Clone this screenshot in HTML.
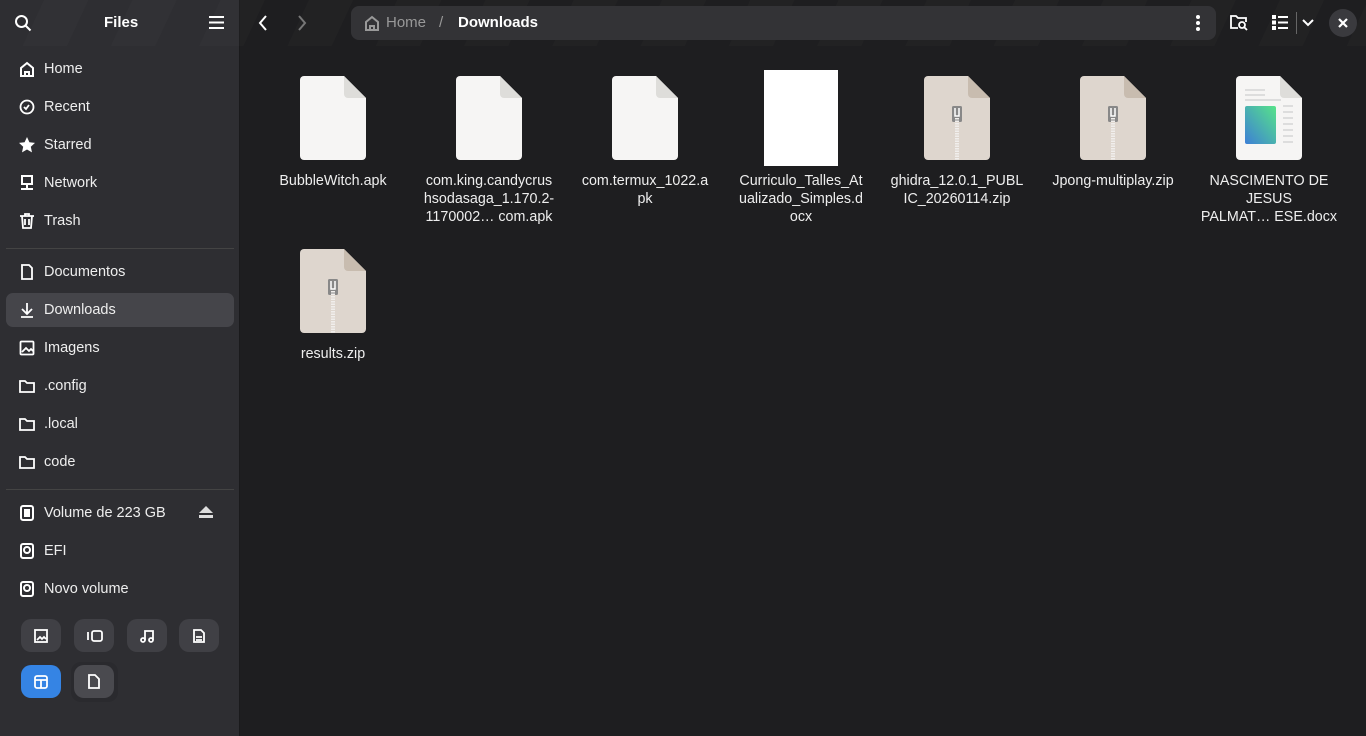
<!DOCTYPE html><html><head><style>
body{margin:0;width:1366px;height:736px;overflow:hidden;background:#1e1e20;font-family:"Liberation Sans",sans-serif;color:#fff;position:relative}
.side{position:absolute;left:0;top:0;width:239px;height:736px;background:#2e2e32;border-right:1px solid #1a1a1c}
.hdr{position:absolute;left:0;top:0;width:1366px;height:46px;background:repeating-linear-gradient(115deg,rgba(255,255,255,0) 0 40px,rgba(255,255,255,.015) 40px 80px)}
.it{position:absolute;left:6px;width:228px;height:34px;font-size:14.5px;line-height:34px;padding-left:38px;box-sizing:border-box;color:#eee}
.it svg{position:absolute;left:13px;top:9px}
.sel{background:#45454a;border-radius:7px}
.sep{position:absolute;left:6px;width:228px;height:1px;background:#444}
.btn{position:absolute;width:40px;height:33px;border-radius:10px;background:#404045}
.f{position:absolute;width:156px;text-align:center;font-size:14.3px;line-height:18px;color:#eee}
.f svg{display:block;margin:0 auto 12px}
</style></head><body>
<div class="side"></div><div class="hdr"></div>
<svg style="position:absolute;left:14px;top:14px" width="18" height="18" fill="none" stroke="#fff" stroke-width="2"><circle cx="7.5" cy="7.5" r="5.5"/><path d="M11.5 11.5l5 5"/></svg>
<div style="position:absolute;left:104px;top:14px;font-size:15px;font-weight:bold">Files</div>
<svg style="position:absolute;left:209px;top:16px" width="15" height="13" stroke="#fff" stroke-width="2"><path d="M0 1h15M0 6.5h15M0 12h15"/></svg>
<div class="it" style="top:52px"><svg width="16" height="16" fill="none" stroke="#fff" stroke-width="2"><path d="M2 15V7l6-5 6 5v8zM6 15v-4h4v4"/></svg>Home</div>
<div class="it" style="top:90px"><svg width="16" height="16" fill="none" stroke="#fff" stroke-width="1.8"><circle cx="8" cy="8" r="6.5"/><path d="M5 8l2 2 3-4"/></svg>Recent</div>
<div class="it" style="top:128px"><svg width="16" height="16"><path fill="#fff" d="M8 0l2.4 5.3 5.6.6-4.2 3.8 1.2 5.7L8 12.5 3 15.4l1.2-5.7L0 5.9l5.6-.6z"/></svg>Starred</div>
<div class="it" style="top:166px"><svg width="16" height="16" fill="none" stroke="#fff" stroke-width="2"><rect x="3" y="1" width="10" height="8"/><path d="M8 9v4M2 14h12"/></svg>Network</div>
<div class="it" style="top:204px"><svg width="16" height="16" fill="none" stroke="#fff" stroke-width="1.8"><path d="M1 3h14M6 3V1h4v2M3 3l1 12h8l1-12M6 6v6M10 6v6"/></svg>Trash</div>
<div class="sep" style="top:248px"></div>
<div class="it" style="top:255px"><svg width="16" height="16" fill="none" stroke="#fff" stroke-width="1.8"><path d="M3 1h7l3 3v11H3z"/></svg>Documentos</div>
<div class="it sel" style="top:293px"><svg width="16" height="16" fill="none" stroke="#fff" stroke-width="1.8"><path d="M8 1v10M3 7l5 5 5-5M2 15h12"/></svg>Downloads</div>
<div class="it" style="top:331px"><svg width="16" height="16" fill="none" stroke="#fff" stroke-width="1.8"><rect x="1.5" y="1.5" width="13" height="13" rx="1"/><path d="M3 12l4-4 3 3 2-2 2 2"/></svg>Imagens</div>
<div class="it" style="top:369px"><svg width="16" height="16" fill="none" stroke="#fff" stroke-width="1.8"><path d="M1 3h5l2 2h7v9H1z"/></svg>.config</div>
<div class="it" style="top:407px"><svg width="16" height="16" fill="none" stroke="#fff" stroke-width="1.8"><path d="M1 3h5l2 2h7v9H1z"/></svg>.local</div>
<div class="it" style="top:445px"><svg width="16" height="16" fill="none" stroke="#fff" stroke-width="1.8"><path d="M1 3h5l2 2h7v9H1z"/></svg>code</div>
<div class="sep" style="top:489px"></div>
<div class="it" style="top:496px"><svg width="16" height="16" fill="none" stroke="#fff" stroke-width="2"><rect x="2" y="1" width="12" height="14" rx="2"/><rect x="5" y="4" width="6" height="8" fill="#fff" stroke="none"/></svg>Volume de 223 GB<svg style="left:193px;top:10px" width="14" height="13" fill="#ddd"><path d="M7 0l7 7H0z"/><rect y="9" width="14" height="3"/></svg></div>
<div class="it" style="top:534px"><svg width="16" height="16" fill="none" stroke="#fff" stroke-width="2"><rect x="2" y="1" width="12" height="14" rx="2"/><circle cx="8" cy="7" r="3"/></svg>EFI</div>
<div class="it" style="top:572px"><svg width="16" height="16" fill="none" stroke="#fff" stroke-width="2"><rect x="2" y="1" width="12" height="14" rx="2"/><circle cx="8" cy="7" r="3"/></svg>Novo volume</div>
<div class="btn" style="left:21px;top:619px"><svg style="margin:10px 13px" width="14" height="14" fill="none" stroke="#fff" stroke-width="1.8"><rect x="1" y="1" width="12" height="12"/><path d="M3 11l3-3 2 2 2-2 2 2"/></svg></div>
<div class="btn" style="left:74px;top:619px"><svg style="margin:10px 13px" width="16" height="14" fill="none" stroke="#fff" stroke-width="1.8"><rect x="5" y="2" width="10" height="10" rx="2"/><path d="M1 3v8"/></svg></div>
<div class="btn" style="left:127px;top:619px"><svg style="margin:10px 13px" width="14" height="14" fill="none" stroke="#fff" stroke-width="1.8"><circle cx="3" cy="11" r="2"/><circle cx="11" cy="11" r="2"/><path d="M5 11V2h8v9"/></svg></div>
<div class="btn" style="left:179px;top:619px"><svg style="margin:10px 14px" width="12" height="14" fill="none" stroke="#fff" stroke-width="1.8"><path d="M1 1h7l3 3v9H1zM3 8h6M3 11h6"/></svg></div>
<div class="btn" style="left:21px;top:665px;background:#3584e4"><svg style="margin:10px 13px" width="14" height="14" fill="none" stroke="#fff" stroke-width="1.8"><rect x="1" y="1" width="12" height="12" rx="2"/><path d="M1 5h12M7 5v8"/></svg></div>
<div class="btn" style="left:71px;top:662px;width:47px;height:40px;background:#2a2a2e"><div class="btn" style="left:3px;top:3px;background:#4a4a4f"><svg style="margin:9px 14px" width="12" height="15" fill="none" stroke="#fff" stroke-width="1.8"><path d="M1 1h6l4 4v9H1z"/></svg></div></div>
<svg style="position:absolute;left:258px;top:15px" width="10" height="16" fill="none" stroke="#fff" stroke-width="2"><path d="M8 1L2 8l6 7"/></svg>
<svg style="position:absolute;left:297px;top:15px" width="10" height="16" fill="none" stroke="#777" stroke-width="2"><path d="M2 1l6 7-6 7"/></svg>
<div style="position:absolute;left:351px;top:6px;width:865px;height:34px;border-radius:8px;background:#333336"></div>
<svg style="position:absolute;left:364px;top:15px" width="16" height="16" fill="none" stroke="#999" stroke-width="2"><path d="M2 15V7l6-5 6 5v8zM6 15v-4h4v4"/></svg>
<div style="position:absolute;left:386px;top:14px;font-size:15px;color:#999">Home</div>
<div style="position:absolute;left:439px;top:14px;font-size:15px;color:#999">/</div>
<div style="position:absolute;left:458px;top:14px;font-size:15px;font-weight:bold">Downloads</div>
<svg style="position:absolute;left:1195px;top:14px" width="6" height="18" fill="#fff"><circle cx="3" cy="3" r="2"/><circle cx="3" cy="9" r="2"/><circle cx="3" cy="15" r="2"/></svg>
<svg style="position:absolute;left:1230px;top:14px" width="18" height="17" fill="none" stroke="#fff" stroke-width="1.8"><path d="M8 14H1V2h5l2 2h8v4"/><circle cx="12" cy="11" r="3"/><path d="M14 13l3 3"/></svg>
<svg style="position:absolute;left:1272px;top:15px" width="16" height="15" fill="#fff"><rect width="4" height="4"/><rect y="5.5" width="4" height="4"/><rect y="11" width="4" height="4"/><rect x="6" y="1" width="10" height="2"/><rect x="6" y="6.5" width="10" height="2"/><rect x="6" y="12" width="10" height="2"/></svg>
<div style="position:absolute;left:1296px;top:12px;width:1px;height:22px;background:#666"></div>
<svg style="position:absolute;left:1302px;top:19px" width="12" height="8" fill="none" stroke="#fff" stroke-width="2"><path d="M1 1l5 5 5-5"/></svg>
<div style="position:absolute;left:1329px;top:9px;width:28px;height:28px;border-radius:50%;background:#3a3a3e"></div>
<svg style="position:absolute;left:1338px;top:18px" width="10" height="10" stroke="#fff" stroke-width="2.2"><path d="M1 1l8 8M9 1L1 9"/></svg>

<svg width="0" height="0" style="position:absolute"><defs>
<g id="doc"><path d="M4 0h40l22 22v58a4 4 0 0 1-4 4H4a4 4 0 0 1-4-4V4a4 4 0 0 1 4-4z" fill="#f6f5f4"/><path d="M44 0l22 22H48a4 4 0 0 1-4-4z" fill="#deddda"/></g>
<g id="zip"><path d="M4 0h40l22 22v58a4 4 0 0 1-4 4H4a4 4 0 0 1-4-4V4a4 4 0 0 1 4-4z" fill="#ded6ce"/><path d="M44 0l22 22H48a4 4 0 0 1-4-4z" fill="#c8bcaf"/><rect x="28" y="30" width="10" height="16" rx="1.5" fill="#888"/><path d="M31 32v8h4v-8" fill="none" stroke="#fff" stroke-width="1.5"/><path d="M33 42v42" stroke="#f0eeec" stroke-width="4" stroke-dasharray="1.5 1"/></g>
</defs></svg>
<div class="f" style="left:255px;top:76px"><svg width="66" height="84"><use href="#doc"/></svg>BubbleWitch.apk</div>
<div class="f" style="left:411px;top:76px"><svg width="66" height="84"><use href="#doc"/></svg>com.king.candycrus<br>hsodasaga_1.170.2-<br>1170002…  com.apk</div>
<div class="f" style="left:567px;top:76px"><svg width="66" height="84"><use href="#doc"/></svg>com.termux_1022.a<br>pk</div>
<div style="position:absolute;left:764px;top:70px;width:74px;height:96px;background:#fff"></div>
<div class="f" style="left:723px;top:172px">Curriculo_Talles_At<br>ualizado_Simples.d<br>ocx</div>
<div class="f" style="left:879px;top:76px"><svg width="66" height="84"><use href="#zip"/></svg>ghidra_12.0.1_PUBL<br>IC_20260114.zip</div>
<div class="f" style="left:1035px;top:76px"><svg width="66" height="84"><use href="#zip"/></svg>Jpong-multiplay.zip</div>
<div class="f" style="left:1191px;top:76px"><svg width="66" height="84"><defs><linearGradient id="g" x1="1" y1="0" x2="0" y2="1"><stop offset="0" stop-color="#57e389"/><stop offset="1" stop-color="#3d7fd6"/></linearGradient></defs><use href="#doc"/><path d="M9 14h20M9 19h20M9 24h36" stroke="#ddd" stroke-width="2"/><rect x="9" y="30" width="31" height="38" rx="2" fill="url(#g)"/><path d="M47 30h10M47 36h10M47 42h10M47 48h10M47 54h10M47 60h10M47 66h10" stroke="#ddd" stroke-width="2"/></svg>NASCIMENTO DE<br>JESUS<br>PALMAT…  ESE.docx</div>
<div class="f" style="left:255px;top:249px"><svg width="66" height="84"><use href="#zip"/></svg>results.zip</div>
</body></html>
